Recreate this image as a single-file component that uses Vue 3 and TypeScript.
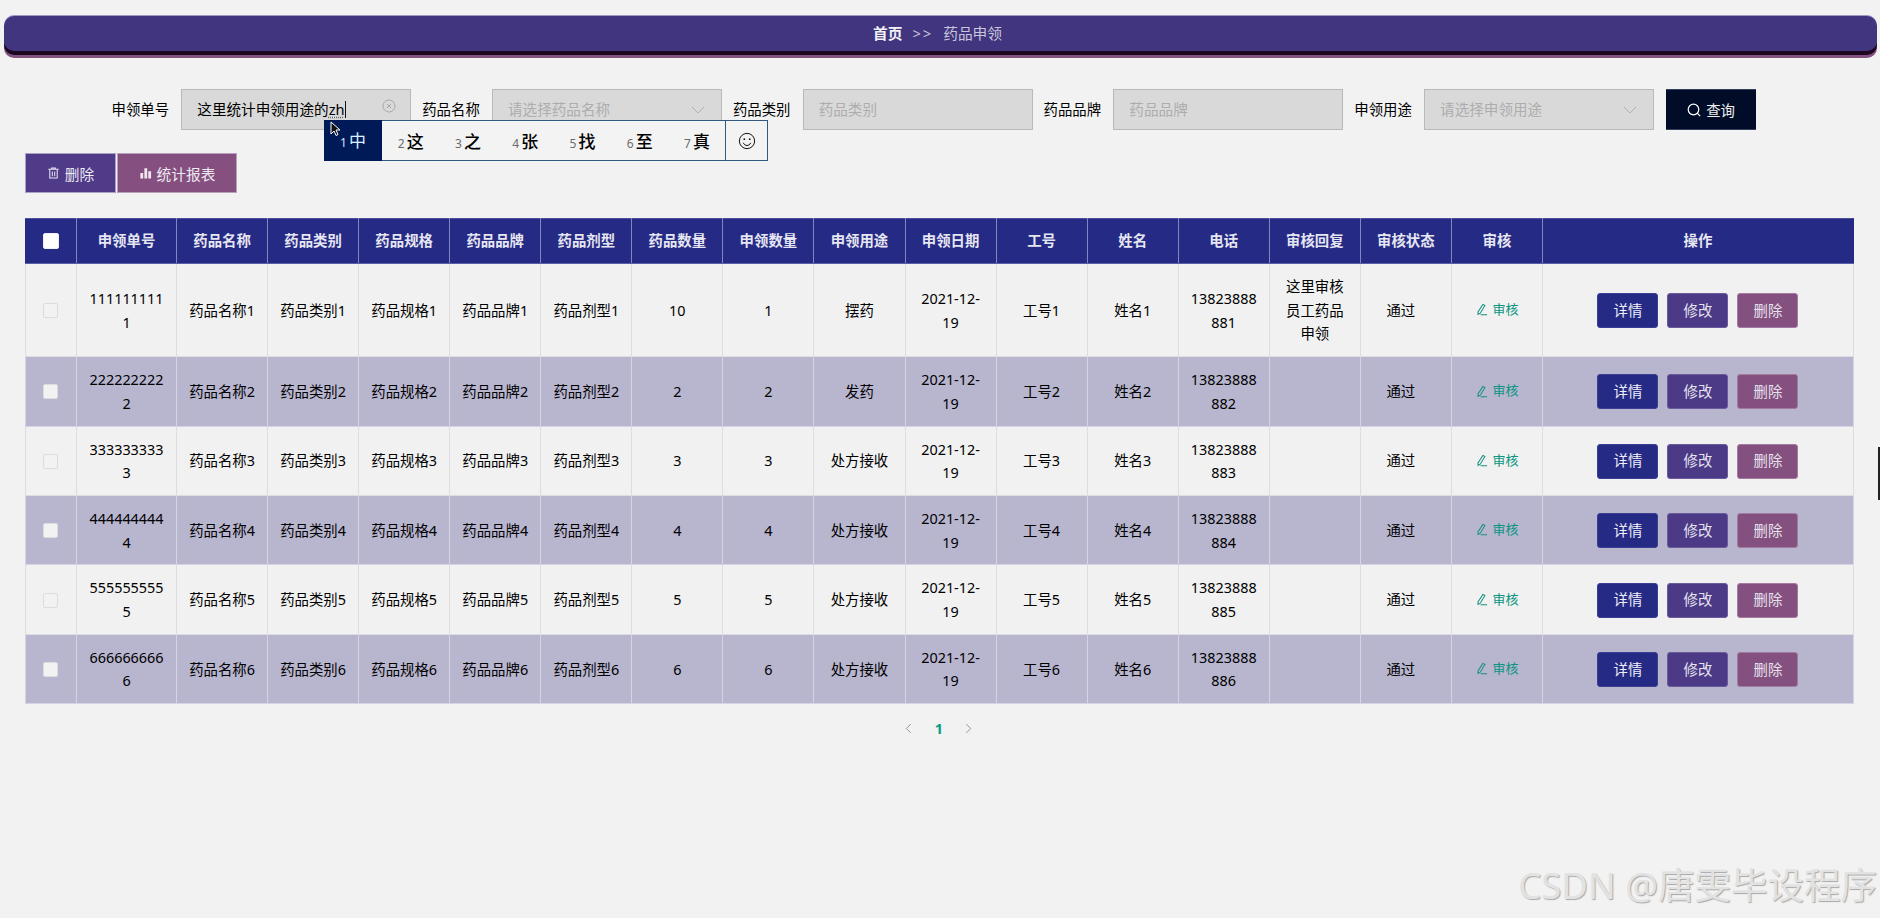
<script setup lang="ts">
interface Row {
  n: number
  no: string
  amount: number
  apply: number
  purpose: string
  reply: string
}
const columns: string[] = ['申领单号', '药品名称', '药品类别', '药品规格', '药品品牌', '药品剂型', '药品数量', '申领数量', '申领用途', '申领日期', '工号', '姓名', '电话', '审核回复', '审核状态', '审核', '操作']
const purposes = ['摆药', '发药', '处方接收', '处方接收', '处方接收', '处方接收']
const rows: Row[] = purposes.map((purpose, i) => {
  const n = i + 1
  return { n, no: String(n).repeat(10), amount: n === 1 ? 10 : n, apply: n, purpose, reply: n === 1 ? '这里审核员工药品申领' : '' }
})
const candidates = ['这', '之', '张', '找', '至', '真']
</script>

<template>
  <div class="page">
    <header class="banner">
      <b class="crumb-home">首页</b>
      <span class="crumb-sep">&gt;&gt;</span>
      <span class="crumb-cur">药品申领</span>
    </header>

    <section class="search">
      <div class="field">
        <label>申领单号</label>
        <div class="box value">
          <span>这里统计申领用途的<u class="comp">zh</u><i class="caret"></i></span>
          <svg class="clear" viewBox="0 0 14 14" width="14" height="14"><circle cx="7" cy="7" r="6" fill="none" stroke="#a8a8a8" /><path d="M5 5l4 4M9 5l-4 4" stroke="#a8a8a8" fill="none" /></svg>
        </div>
      </div>
      <div class="field">
        <label>药品名称</label>
        <div class="box ph"><span>请选择药品名称</span><svg class="chev" viewBox="0 0 14 8" width="14" height="8"><path d="M1 1l6 6 6-6" fill="none" stroke="#b0b0b0" /></svg></div>
      </div>
      <div class="field">
        <label>药品类别</label>
        <div class="box ph"><span>药品类别</span></div>
      </div>
      <div class="field">
        <label>药品品牌</label>
        <div class="box ph"><span>药品品牌</span></div>
      </div>
      <div class="field">
        <label>申领用途</label>
        <div class="box ph"><span>请选择申领用途</span><svg class="chev" viewBox="0 0 14 8" width="14" height="8"><path d="M1 1l6 6 6-6" fill="none" stroke="#b0b0b0" /></svg></div>
      </div>
      <button class="query">
        <svg viewBox="0 0 14 14" width="14" height="14"><circle cx="6.500" cy="6.500" r="5.300" fill="none" stroke="#fff" stroke-width="1.200" /><path d="M10.200 10.200l3 3" stroke="#fff" stroke-width="1.200" /></svg>
        查询
      </button>
    </section>

    <div class="tools">
      <button class="tool del">
        <svg viewBox="0 0 14 14" width="13" height="14"><path d="M1.500 3h11M5 3V1.500h4V3M3 3v9.500h8V3M5.700 5.500v5M8.300 5.500v5" fill="none" stroke="#e9e6f2" stroke-width="1.100" /></svg>
        删除
      </button>
      <button class="tool stat">
        <svg viewBox="0 0 14 14" width="13" height="14"><path d="M1.500 7h3v6h-3zM5.800 2h3v11h-3zM10 5h3v8h-3z" fill="#f0e8ef" /></svg>
        统计报表
      </button>
    </div>

    <table class="grid">
      <colgroup>
        <col class="c-check" />
        <col class="c-no" />
        <col v-for="i in 15" :key="i" class="c-std" />
        <col class="c-op" />
      </colgroup>
      <thead>
        <tr>
          <th><i class="check head"></i></th>
          <th v-for="c in columns" :key="c">{{ c }}</th>
        </tr>
      </thead>
      <tbody>
        <tr v-for="r in rows" :key="r.n">
          <td><i class="check"></i></td>
          <td class="breakall">{{ r.no }}</td>
          <td>药品名称{{ r.n }}</td>
          <td>药品类别{{ r.n }}</td>
          <td>药品规格{{ r.n }}</td>
          <td>药品品牌{{ r.n }}</td>
          <td>药品剂型{{ r.n }}</td>
          <td>{{ r.amount }}</td>
          <td>{{ r.apply }}</td>
          <td>{{ r.purpose }}</td>
          <td>2021-12-19</td>
          <td>工号{{ r.n }}</td>
          <td>姓名{{ r.n }}</td>
          <td class="breakall">1382388888{{ r.n }}</td>
          <td>{{ r.reply }}</td>
          <td><span class="status">通过</span></td>
          <td>
            <span class="audit">
              <svg viewBox="0 0 14 14" width="13" height="13"><path d="M8.500 1.500l2.200 1.200-5 8.300-2.400 1.300-.1-2.600zM6 12.700h7" fill="none" stroke="#14917f" stroke-width="1.100" /></svg>
              审核
            </span>
          </td>
          <td>
            <div class="ops">
              <button class="op blue">详情</button>
              <button class="op violet">修改</button>
              <button class="op mauve">删除</button>
            </div>
          </td>
        </tr>
      </tbody>
    </table>

    <nav class="pager">
      <svg viewBox="0 0 8 12" width="7" height="11"><path d="M6.500 1L1.500 6l5 5" fill="none" stroke="#8f8f8f" stroke-width="1.100" /></svg>
      <b>1</b>
      <svg viewBox="0 0 8 12" width="7" height="11"><path d="M1.500 1l5 5-5 5" fill="none" stroke="#8f8f8f" stroke-width="1.100" /></svg>
    </nav>

    <div class="ime">
      <div class="cand first"><small>1</small>中</div>
      <div v-for="(c, i) in candidates" :key="c" class="cand"><small>{{ i + 2 }}</small>{{ c }}</div>
      <div class="emoji">
        <svg viewBox="0 0 20 20" width="18" height="18"><circle cx="10" cy="10" r="8.500" fill="none" stroke="#111" stroke-width="1.100" /><circle cx="7" cy="8" r="1" fill="#111" /><circle cx="13" cy="8" r="1" fill="#111" /><path d="M5.800 12c1 2 2.600 3 4.200 3s3.200-1 4.200-3" fill="none" stroke="#111" stroke-width="1.100" /></svg>
      </div>
    </div>
    <svg class="cursor" viewBox="0 0 10 16" width="10" height="16"><path d="M1 1v12l3-3 2 4.500 2-1-2-4.500h4z" fill="#111" stroke="#fff" stroke-width="1" /></svg>
    <i class="edge"></i>
    <div class="mark">CSDN @唐雯毕设程序</div>
  </div>
</template>

<style>
html, body { margin: 0; background: #f2f2f2; }
</style>

<style scoped>
.page {
  position: relative;
  height: 918px;
  overflow: hidden;
  padding-top: 16px;
  box-sizing: border-box;
  background: #f2f2f2;
  font-family: "Noto Sans", "Noto Sans CJK SC", sans-serif;
  font-size: 14.4px;
  color: #000;
}
.banner {
  height: 35px;
  margin: 0 3px 0 4px;
  display: flex;
  align-items: center;
  justify-content: center;
  padding-right: 6px;
  gap: 10px;
  background: #41357f;
  border-radius: 10px;
  box-shadow: 0 -1px 0 #9d98c0, 0 4px 0 #1c0620, 0 7px 0 #84507f;
  color: #c9c6dc;
  line-height: 1;
  font-size: 14.700px;
}
.crumb-home { color: #f2f2f7; }
.crumb-sep { letter-spacing: 2px; }
.search {
  display: flex;
  margin-top: 38px;
  padding-left: 100.600px;
}
.field { display: flex; width: 310.700px; }
.field label {
  width: 80.700px;
  box-sizing: border-box;
  padding-right: 12.200px;
  text-align: right;
  line-height: 41px;
  white-space: nowrap;
}
.box {
  width: 230px;
  height: 41px;
  box-sizing: border-box;
  border: 1px solid #b9b9b9;
  background: #d9d9d9;
  padding: 0 15px;
  display: flex;
  align-items: center;
  justify-content: space-between;
  font-size: 14.600px;
}
.box > span { margin-top: -2px; }
.ph { color: #adadad; }
.comp { text-decoration: underline dotted #666; text-underline-offset: 2px; }
.caret { display: inline-block; width: 1px; height: 17px; background: #111; vertical-align: -3px; }
.clear { margin: -8px -1px 0 0; }
.chev { margin-right: 1px; }
.query {
  margin-left: 12px;
  width: 90px;
  height: 41px;
  border: 0;
  border-top: 1px solid #33415c;
  border-bottom: 1px solid #33415c;
  background: #010d28;
  color: #f0f0f0;
  font: inherit;
  display: flex;
  align-items: center;
  justify-content: center;
  gap: 5px;
}
.tools { display: flex; margin: 23px 0 25px 25px; gap: 1px; }
.tool {
  height: 40px;
  border: 1px solid #a9a2c4;
  color: #eeeaf3;
  font: inherit;
  font-size: 14.700px;
  display: flex;
  align-items: center;
  justify-content: center;
  gap: 5px;
  padding: 0;
}
.del { width: 91px; background: #4f3b88; }
.stat { width: 120px; background: #85507f; border-color: #b8a0bb; }
.grid {
  width: 1828px;
  margin-left: 25px;
  table-layout: fixed;
  border-collapse: collapse;
  text-align: center;
  line-height: 23.700px;
}
.c-check { width: 51px; }
.c-no { width: 100px; }
.c-std { width: 91.070px; }
.c-op { width: 311px; }
.grid th {
  height: 44px;
  padding: 0;
  background: #252a85;
  color: #e6e6f2;
  font-weight: 700;
  border: 1px solid #8486bd;
  border-top-color: #4b4f9c;
  border-bottom-color: #5b5fa6;
}
.grid th:first-child { border-left-color: #252a85; }
.grid th:last-child { border-right-color: #252a85; }
.grid td {
  padding: 11px 12px 10px;
  border: 1px solid #dddddf;
  background: #f1f1f1;
  word-break: normal;
  overflow-wrap: break-word;
}
.grid tbody tr:nth-child(even) td {
  background: #b8b5cf;
  border-color: #d6d4e4;
}
.grid td.breakall { word-break: break-all; }
.check {
  display: block;
  width: 13px;
  height: 13px;
  margin: 0 auto;
  transform: translateX(-1px);
  border: 1px solid #dcdcdc;
  border-radius: 2px;
  background: #f2f2f2;
}
.check.head {
  width: 14px;
  height: 14px;
  transform: none;
  border-color: #eef;
  background: #fff;
}
.status { padding-right: 10px; }
.audit {
  display: inline-flex;
  align-items: center;
  gap: 4px;
  color: #0c9582;
  font-size: 13px;
  white-space: nowrap;
}
.ops { display: flex; justify-content: center; gap: 9px; margin: 0 -12px; }
.op {
  width: 61px;
  height: 35px;
  padding: 0;
  border: 1px solid transparent;
  border-radius: 3px;
  color: #e6e3f0;
  font: inherit;
}
.blue { background: #252a85; border-color: #3b3f94; color: #f0f0f8; }
.violet { background: #4c3a86; border-color: #6b5b9c; }
.mauve { background: #84507f; border-color: #a47ba0; }
.pager {
  display: flex;
  align-items: center;
  margin: 14px 0 0 905px;
  height: 20px;
}
.pager b { width: 54px; text-align: center; color: #0a9a85; font-size: 14.500px; }
.pager svg:last-child { margin-left: -1px; }
.ime {
  position: absolute;
  left: 324px;
  top: 120px;
  width: 444px;
  height: 41px;
  box-sizing: border-box;
  display: flex;
  background: #f3f3f3;
  border: 1px solid #2f5a7d;
  font-size: 17px;
  line-height: 41px;
}
.cand { width: 57.500px; padding-left: 16px; box-sizing: border-box; white-space: nowrap; font-weight: 500; }
.cand small { font-size: 12px; color: #6b6b6b; margin-right: 2px; font-weight: 400; }
.cand.first { margin: -1px 0 -1px -1px; height: 41px; width: 58px; line-height: 42px; background: #001a57; color: #d8f0ff; font-weight: 400; }
.cand.first small { color: #cfe6ff; }
.emoji {
  margin-left: auto;
  width: 41px;
  border-left: 1px solid #2f5a7d;
  display: flex;
  align-items: center;
  justify-content: center;
}
.cursor { position: absolute; left: 330px; top: 121px; }
.edge { position: absolute; right: 0; top: 447px; width: 2px; height: 53px; background: #222; }
.mark {
  position: absolute;
  right: 3px;
  top: 863px;
  font-size: 36.500px;
  line-height: 44px;
  color: #e2e2e2;
  text-shadow: 1px 1px 1px #a8a8a8;
  white-space: nowrap;
}
</style>
